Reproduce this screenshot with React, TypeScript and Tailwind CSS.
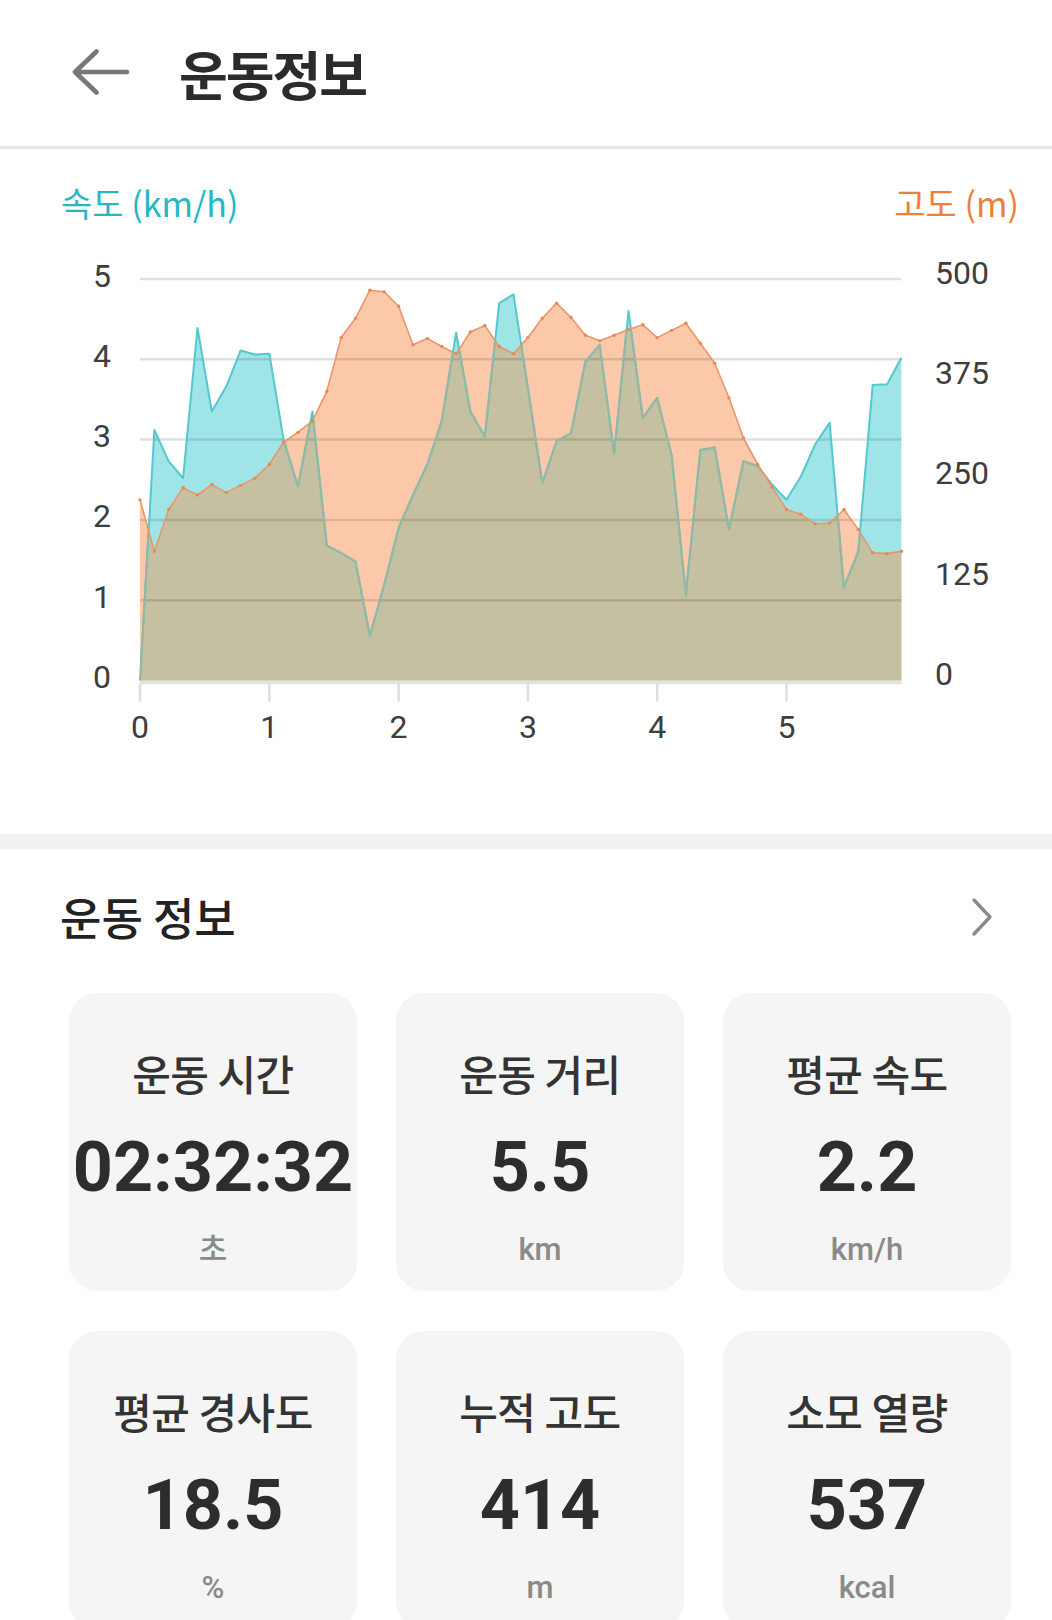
import React from 'react';

// speed (km/h) and altitude (m), one sample every 1/9 km
const SPEED = [
  0, 3.12, 2.73, 2.52, 4.39, 3.35, 3.66, 4.11, 4.06, 4.07, 2.99, 2.42, 3.35, 1.68, 1.59, 1.48, 0.56, 1.19,
  1.9, 2.31, 2.69, 3.23, 4.33, 3.35, 3.04, 4.7, 4.81, 3.64, 2.46, 2.98, 3.08, 3.97, 4.18, 2.83, 4.6, 3.27,
  3.52, 2.81, 1.07, 2.87, 2.9, 1.88, 2.73, 2.67, 2.44, 2.25, 2.54, 2.94, 3.21, 1.16, 1.61, 3.68, 3.69, 4.02,
];
const ALT = [
  225, 161, 213, 240, 231, 244, 234, 243, 252, 269, 297, 309, 323, 360, 427, 451, 486, 484, 466, 418, 426, 416,
  407, 434, 442, 416, 407, 427, 451, 470, 452, 430, 423, 430, 437, 443, 427, 436, 445, 420, 395, 352, 302, 269,
  241, 213, 207, 195, 196, 213, 188, 159, 158, 161,
];

const stats = [
  { title: '운동 시간', value: '02:32:32', unit: '초' },
  { title: '운동 거리', value: '5.5', unit: 'km' },
  { title: '평균 속도', value: '2.2', unit: 'km/h' },
  { title: '평균 경사도', value: '18.5', unit: '%' },
  { title: '누적 고도', value: '414', unit: 'm' },
  { title: '소모 열량', value: '537', unit: 'kcal' },
];

// plot geometry (svg coords)
const X0 = 140;
const KM = 129.3;
const BASE = 432.5;
const ROW = 80.3;
const xOf = (i: number) => X0 + (i * KM) / 9;
const ySpd = (v: number) => BASE - v * ROW;
const yAlt = (a: number) => BASE - a * (ROW * 5) / 500;

function linePath(vals: number[], y: (v: number) => number) {
  return vals.map((v, i) => `${i ? 'L' : 'M'}${xOf(i).toFixed(1)} ${y(v).toFixed(1)}`).join(' ');
}
function areaPath(vals: number[], y: (v: number) => number) {
  const last = xOf(vals.length - 1).toFixed(1);
  return `${linePath(vals, y)} L${last} ${BASE} L${X0} ${BASE} Z`;
}

function Chart() {
  const spdLine = linePath(SPEED, ySpd);
  const altLine = linePath(ALT, yAlt);
  const spdArea = areaPath(SPEED, ySpd);
  const altArea = areaPath(ALT, yAlt);
  const right = xOf(SPEED.length - 1);

  return (
    <svg width="1052" height="510" viewBox="0 0 1052 510" className="block font-['Roboto',sans-serif]">
      <defs>
        <clipPath id="spd-clip">
          <path d={spdArea} />
        </clipPath>
        <clipPath id="alt-clip">
          <path d={altArea} />
        </clipPath>
      </defs>

      {/* axis base + ticks */}
      <line x1={X0} x2={right} y1={BASE + 2} y2={BASE + 2} stroke="#e2e2e2" strokeWidth="3.5" />
      {[0, 1, 2, 3, 4, 5].map((k) => (
        <line key={k} x1={X0 + k * KM} x2={X0 + k * KM} y1={BASE + 3} y2={BASE + 21} stroke="#dedede" strokeWidth="2.5" />
      ))}

      {/* fills */}
      <path d={spdArea} fill="#9fe5e8" />
      <path d={altArea} fill="#fbc9a9" />
      <path d={altArea} fill="#c4c0a1" clipPath="url(#spd-clip)" />

      {/* grid */}
      {[5, 4, 3, 2, 1].map((v) => (
        <line key={v} x1={X0} x2={right} y1={ySpd(v)} y2={ySpd(v)} stroke="#000" strokeOpacity="0.12" strokeWidth="2.5" />
      ))}

      {/* lines */}
      <path d={spdLine} fill="none" stroke="#55c7cf" strokeWidth="2" strokeLinejoin="round" />
      <path d={spdLine} fill="none" stroke="#97b7a2" strokeWidth="2" strokeLinejoin="round" clipPath="url(#alt-clip)" />
      <path d={altLine} fill="none" stroke="#e9966a" strokeWidth="1.6" strokeLinejoin="round" />
      {ALT.map((a, i) => (
        <circle key={i} cx={xOf(i)} cy={yAlt(a)} r="1.7" fill="#e58a56" />
      ))}

      {/* left axis */}
      {[0, 1, 2, 3, 4, 5].map((v) => (
        <text key={v} x="102" y={ySpd(v) + 7.5} textAnchor="middle" fontSize="32" fill="#3d3d3d">
          {v}
        </text>
      ))}
      {/* right axis */}
      {[0, 125, 250, 375, 500].map((a) => (
        <text key={a} x="935" y={yAlt(a) + 4.5} fontSize="32" fill="#3d3d3d">
          {a}
        </text>
      ))}
      {/* x axis */}
      {[0, 1, 2, 3, 4, 5].map((k) => (
        <text key={k} x={X0 + k * KM} y="489.5" textAnchor="middle" fontSize="32" fill="#3d3d3d">
          {k}
        </text>
      ))}
    </svg>
  );
}

export default function App() {
  return (
    <div className="h-[1620px] w-full overflow-hidden bg-white font-['Noto_Sans_CJK_KR',sans-serif]">
      {/* Header */}
      <header className="flex h-[149px] items-center border-b-[3px] border-[#e6e6e6] pl-[72px]">
        <svg width="58" height="46" viewBox="0 0 58 46" className="-mt-[3px]">
          <path d="M3 23 H55 M24.5 2.5 L3 23 L24.5 43.5" fill="none" stroke="#777" strokeWidth="4.6" strokeLinecap="round" strokeLinejoin="round" />
        </svg>
        <h1 className="ml-[49px] text-[53px] font-bold leading-[60px] tracking-[-2px] text-[#2b2b2b]">운동정보</h1>
      </header>

      {/* Chart */}
      <section className="pb-[76px]">
        <div className="flex justify-between pl-[61px] pr-[33px] pt-[34px] text-[34px] leading-[40px]">
          <span className="text-[#25b7c3]">속도 (km/h)</span>
          <span className="text-[#ec803a]">고도 (m)</span>
        </div>
        <div className="mt-[25px]">
          <Chart />
        </div>
      </section>

      <div className="h-[15px] bg-[#f1f1f2]" />

      {/* Stats */}
      <section>
        <div className="flex items-center justify-between pl-[60px] pr-[58px] pt-[43px]">
          <h2 className="text-[45px] font-medium leading-[50px] text-[#222]">운동 정보</h2>
          <svg width="24" height="40" viewBox="0 0 24 40">
            <path d="M4 3 L20 20 L4 37" fill="none" stroke="#8a8a8a" strokeWidth="3.4" strokeLinecap="round" strokeLinejoin="round" />
          </svg>
        </div>

        <div className="mt-[51px] grid grid-cols-3 gap-x-[39px] gap-y-[40px] pl-[69px] pr-[41px]">
          {stats.map((s) => (
            <div key={s.title} className="flex h-[298px] flex-col items-center rounded-[28px] bg-[#f5f5f5] pt-[57px]">
              <div className="text-[42px] font-medium leading-[46px] tracking-[-0.5px] text-[#333]">{s.title}</div>
              <div className="mt-[31px] font-['Roboto',sans-serif] text-[70px] font-bold leading-[80px] text-[#2d2d2d]">
                {s.value}
              </div>
              <div className="mt-[25px] font-['Roboto','Noto_Sans_CJK_KR',sans-serif] text-[31px] font-medium leading-[36px] text-[#8a8a8a]">
                {s.unit}
              </div>
            </div>
          ))}
        </div>
      </section>
    </div>
  );
}
